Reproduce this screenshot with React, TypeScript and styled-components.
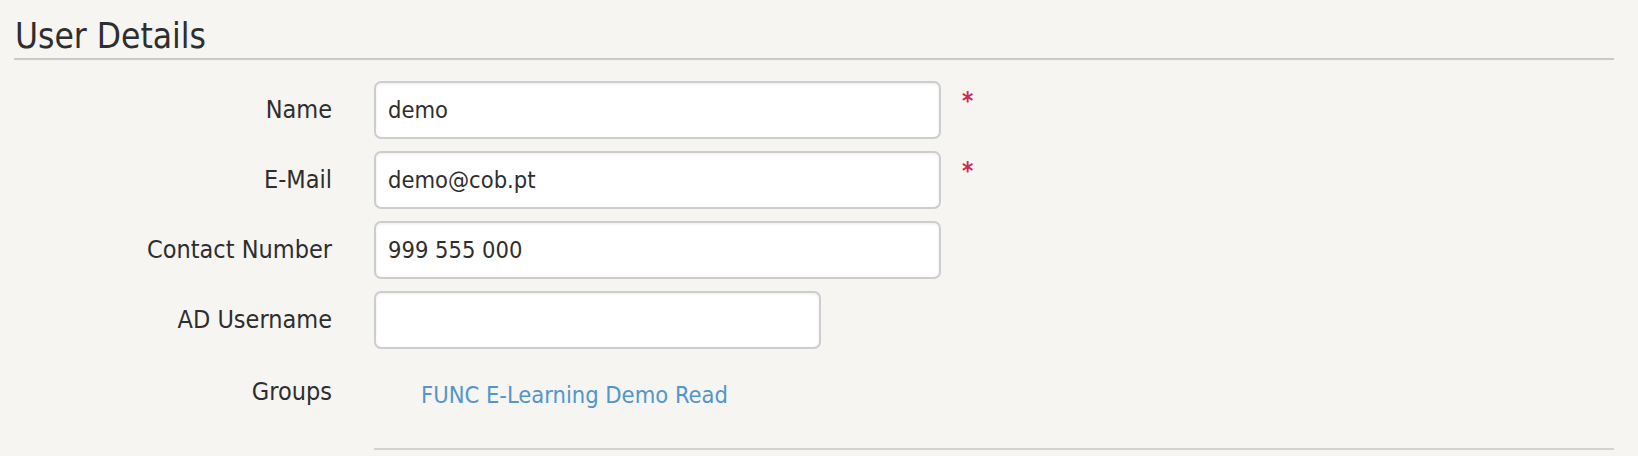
import React from "react";
import styled, { createGlobalStyle } from "styled-components";

const GlobalStyle = createGlobalStyle`
  html, body {
    margin: 0;
    padding: 0;
    background: #f6f5f2;
  }
  body {
    font-family: "DejaVu Sans Condensed", "DejaVu Sans", sans-serif;
    font-stretch: condensed;
    color: #2e2e2e;
  }
`;

const Page = styled.div`
  padding: 0 24px 0 14px;
`;

const Title = styled.h2`
  margin: 0;
  padding: 16px 0 2px 1px;
  height: 40px;
  line-height: 40px;
  font-size: 35px;
  font-weight: normal;
  color: #2e2e2e;
  border-bottom: 2px solid #cbc8c8;
`;

const Form = styled.div`
  display: flex;
  flex-direction: column;
  gap: 12px;
  padding-top: 21px;
`;

const Row = styled.div<{ $top?: boolean }>`
  display: flex;
  align-items: ${(p) => (p.$top ? "flex-start" : "center")};
`;

const Label = styled.label<{ $pad?: number }>`
  flex: 0 0 318px;
  margin-right: 42px;
  text-align: right;
  font-size: 25px;
  line-height: 28px;
  color: #2e2e2e;
  padding-top: ${(p) => p.$pad ?? 0}px;
`;

const Input = styled.input<{ $w: number }>`
  box-sizing: border-box;
  width: ${(p) => p.$w}px;
  height: 58px;
  padding: 0 12px;
  border: 2px solid #cdcdcd;
  border-radius: 7px;
  background: #ffffff;
  box-shadow: inset 0 1px 3px rgba(0, 0, 0, 0.08);
  font-family: "DejaVu Sans Condensed", "DejaVu Sans", sans-serif;
  font-stretch: condensed;
  font-size: 23.5px;
  color: #2e2e2e;
  outline: none;
`;

const Required = styled.span`
  align-self: flex-start;
  margin: 8px 0 0 21px;
  font-size: 24px;
  line-height: 1;
  font-weight: bold;
  color: #cf2a52;
`;

const GroupField = styled.div`
  flex: 1;
  padding: 20px 0 39px 47px;
  border-bottom: 2px solid #d3d2d1;
`;

const GroupLink = styled.a`
  font-size: 23.5px;
  line-height: 28px;
  color: #5396ca;
  text-decoration: none;
  display: block;
`;

type Field = { label: string; value: string; width: number; required?: boolean };

const fields: Field[] = [
  { label: "Name", value: "demo", width: 567, required: true },
  { label: "E-Mail", value: "demo@cob.pt", width: 567, required: true },
  { label: "Contact Number", value: "999 555 000", width: 567 },
  { label: "AD Username", value: "", width: 447 },
];

export default function App() {
  return (
    <>
      <GlobalStyle />
      <Page>
        <Title>User Details</Title>
        <Form>
          {fields.map((f) => (
            <Row key={f.label}>
              <Label>{f.label}</Label>
              <Input $w={f.width} defaultValue={f.value} />
              {f.required && <Required>*</Required>}
            </Row>
          ))}
          <Row $top>
            <Label $pad={17}>Groups</Label>
            <GroupField>
              <GroupLink href="#">FUNC E-Learning Demo Read</GroupLink>
            </GroupField>
          </Row>
        </Form>
      </Page>
    </>
  );
}
